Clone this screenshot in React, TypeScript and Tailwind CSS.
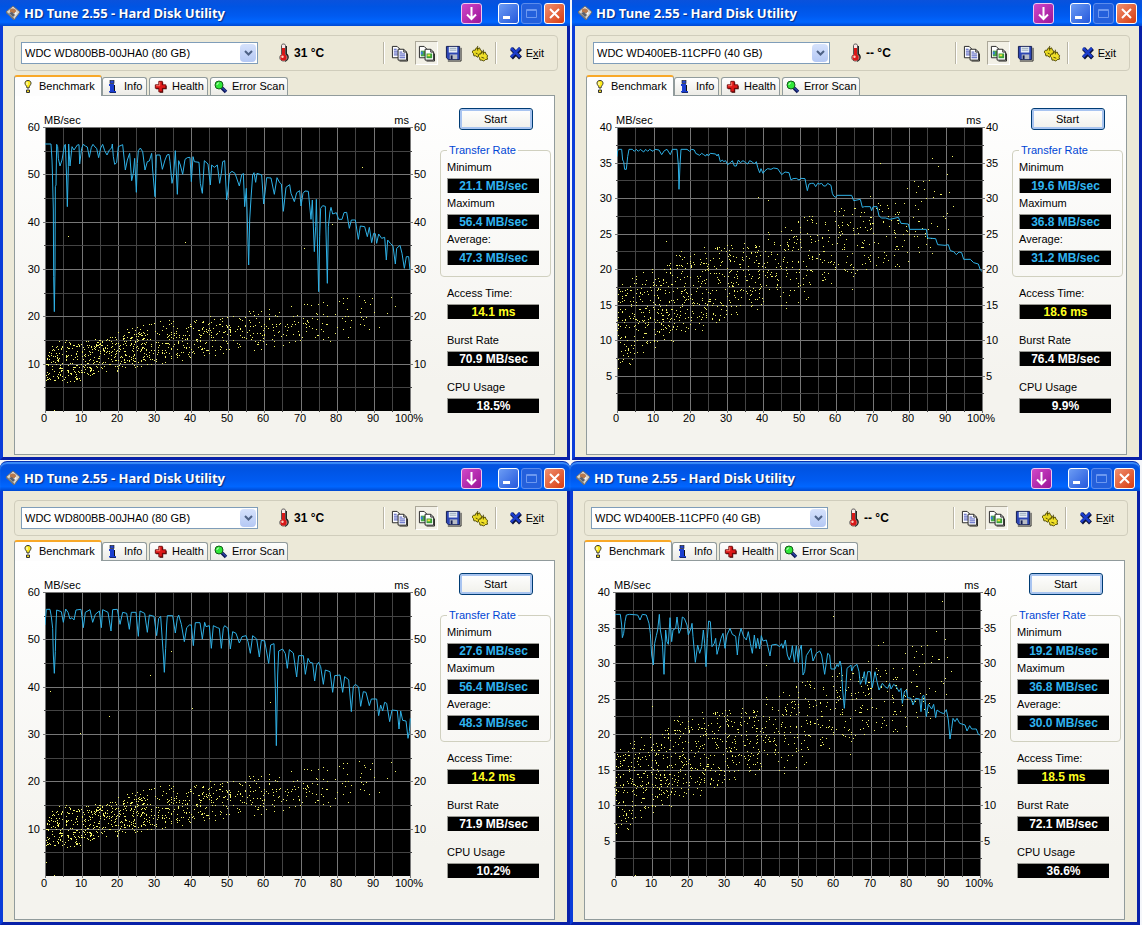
import clsx from "clsx";
import type { ReactNode } from "react";

type Drive = {
  name: string;
  max: number;
  step: number;
  minor: number;
  seed: number;
  dots: number;
  // [percent, lowest ms, highest ms]
  band: [number, number, number][];
};

type Run = {
  drive: Drive;
  temperature: string;
  minimum: string;
  maximum: string;
  average: string;
  access: string;
  burst: string;
  cpu: string;
  // top-left corner of the trace's own coordinates
  origin: [number, number];
  trace: string;
  strays: [number, number][];
};

const WD800: Drive = {
  name: "WDC WD800BB-00JHA0 (80 GB)",
  max: 60,
  step: 10,
  minor: 5,
  seed: 7,
  dots: 840,
  band: [
    [0, 4.8, 15],
    [10, 6.4, 15.5],
    [20, 8.5, 17],
    [30, 9.2, 19.5],
    [45, 11, 20],
    [60, 12.8, 22.5],
    [75, 14, 24],
    [100, 18, 26]
  ]
};

const WD400: Drive = {
  name: "WDC WD400EB-11CPF0 (40 GB)",
  max: 40,
  step: 5,
  minor: 2.5,
  seed: 23,
  dots: 940,
  band: [
    [0, 5.5, 19],
    [10, 8.2, 20.5],
    [20, 10.5, 23.5],
    [35, 13.5, 24.5],
    [50, 14.2, 28],
    [65, 17, 30],
    [80, 20, 33],
    [90, 23, 36],
    [100, 29, 36]
  ]
};

const RUNS: Run[] = [
  {
    drive: WD800,
    temperature: "31 °C",
    minimum: "21.1 MB/sec",
    maximum: "56.4 MB/sec",
    average: "47.3 MB/sec",
    access: "14.1 ms",
    burst: "70.9 MB/sec",
    cpu: "18.5%",
    origin: [135, 51],
    trace:
      "135,102 153,102 156,150 157,180 160,300 161,500 163,605 165,480 166,230 168,225 170,103 173,110 175,145 180,168 186,150 193,108 196,103 199,180 202,290 205,170 206,102 210,168 216,110 222,120 232,105 237,104 239,162 245,115 250,103 256,108 262,111 268,142 274,112 279,103 285,111 290,115 296,143 302,114 308,103 314,122 321,135 328,120 335,114 337,102 340,140 344,163 350,158 355,110 368,104 376,180 382,150 389,130 395,212 400,190 404,145 409,247 412,160 415,122 421,114 428,125 435,180 442,155 448,153 455,130 458,180 465,260 468,175 469,135 480,135 487,178 495,150 501,135 507,133 510,155 516,220 521,195 526,122 532,253 536,152 541,165 548,193 555,148 562,143 570,142 574,215 579,140 583,155 597,157 601,220 607,250 613,152 624,162 631,225 635,165 643,172 652,165 654,180 659,220 664,190 668,155 674,152 680,270 684,240 689,190 696,184 705,190 718,228 725,195 730,190 734,290 739,235 746,465 749,330 753,265 758,195 762,188 767,217 771,190 785,195 791,282 796,240 800,203 813,204 823,253 831,203 839,218 844,222 850,304 858,232 869,224 873,250 883,275 890,248 899,242 903,288 909,250 915,243 925,244 933,328 937,270 943,425 947,350 949,268 956,545 959,380 962,295 968,287 976,289 982,520 985,350 990,305 993,292 998,312 1009,308 1016,328 1026,328 1032,308 1040,307 1048,355 1054,330 1066,330 1075,388 1081,348 1094,350 1102,380 1108,352 1115,398 1121,370 1126,371 1130,400 1136,372 1145,385 1154,382 1159,450 1163,390 1171,400 1179,408 1186,462 1190,415 1200,406 1206,430 1213,475 1219,440 1226,440 1230,480",
    strays: [[6.4, 37], [38.4, 35.6], [71, 34.5], [78.6, 39.6], [86.8, 51.5], [2.5, 0.3]]
  },
  {
    drive: WD400,
    temperature: "-- °C",
    minimum: "19.6 MB/sec",
    maximum: "36.8 MB/sec",
    average: "31.2 MB/sec",
    access: "18.6 ms",
    burst: "76.4 MB/sec",
    cpu: "9.9%",
    origin: [52, 51],
    trace:
      "52,140 54,122 58,118 66,118 69,150 72,155 75,178 80,178 84,140 88,118 98,118 104,124 110,118 116,124 122,118 132,126 138,118 144,124 150,118 160,124 166,118 178,120 186,134 194,122 202,118 212,134 218,118 232,118 236,165 238,238 241,165 244,118 262,118 270,124 276,118 284,120 288,130 300,136 306,130 312,134 318,138 322,132 326,138 332,130 348,132 352,138 356,132 362,155 368,150 372,155 378,152 384,164 392,158 398,152 404,168 410,168 416,150 422,158 430,152 438,158 444,162 450,152 458,156 464,162 470,155 474,172 480,188 484,176 490,190 496,182 504,176 514,178 522,174 534,176 546,194 556,186 568,188 574,210 580,206 590,205 598,210 604,205 616,206 619,222 623,242 628,222 636,220 642,220 648,230 654,220 660,222 666,220 672,228 678,228 684,220 694,226 698,250 702,258 708,262 712,256 756,256 762,272 782,268 788,292 794,290 812,290 816,302 820,290 832,290 838,318 846,324 858,324 870,328 880,326 896,322 904,340 926,342 930,358 980,358 984,384 1008,386 1014,404 1036,406 1046,404 1052,422 1062,425 1070,434 1078,426 1086,428 1092,448 1112,448 1122,458 1136,462 1142,480 1147,484",
    strays: [[38.7, 30.2], [41.4, 29.7], [72, 34.9], [86.2, 35.6], [91.8, 35.9], [13.5, 23.9], [1.5, 7.1], [3.4, 6.7]]
  },
  {
    drive: WD800,
    temperature: "31 °C",
    minimum: "27.6 MB/sec",
    maximum: "56.4 MB/sec",
    average: "48.3 MB/sec",
    access: "14.2 ms",
    burst: "71.9 MB/sec",
    cpu: "10.2%",
    origin: [135, 51],
    trace:
      "135,150 137,125 139,103 150,103 154,125 158,160 160,240 163,295 166,230 168,150 170,105 184,110 190,142 197,102 204,112 210,132 216,128 222,135 228,105 243,103 250,158 256,112 270,104 278,142 286,118 298,108 304,158 308,104 324,112 333,168 338,104 352,103 360,148 368,112 380,115 388,163 394,112 408,112 415,184 420,108 434,115 442,172 448,120 462,124 470,182 476,130 482,124 490,240 493,292 497,220 500,150 502,122 518,122 526,174 532,130 536,120 544,148 553,200 560,158 568,150 574,150 580,212 586,143 600,143 607,192 614,142 618,155 628,152 634,220 640,152 652,158 658,160 664,220 670,160 674,152 684,160 691,222 698,170 708,175 718,204 726,185 738,182 744,200 751,235 758,182 770,192 778,246 784,196 794,198 806,265 812,210 822,206 826,340 829,512 833,300 836,228 848,222 856,236 862,280 868,224 880,234 890,306 896,242 910,242 916,298 924,250 930,262 938,264 944,318 950,270 956,262 962,275 970,328 976,285 990,290 998,352 1004,302 1020,300 1028,352 1034,305 1046,314 1054,410 1060,335 1066,328 1076,336 1082,394 1090,350 1098,352 1108,392 1114,372 1130,372 1136,422 1142,390 1148,408 1154,382 1160,385 1169,440 1176,405 1192,407 1197,462 1202,408 1208,436 1218,438 1224,490 1228,470 1231,430",
    strays: [[1.4, 39], [17.6, 33.9], [28.8, 42.4], [34.6, 47.6], [40.3, 35.4], [61.7, 36.7], [9.7, 30.2], [0.3, 3], [2.5, 0.3]]
  },
  {
    drive: WD400,
    temperature: "-- °C",
    minimum: "19.2 MB/sec",
    maximum: "36.8 MB/sec",
    average: "30.0 MB/sec",
    access: "18.5 ms",
    burst: "72.1 MB/sec",
    cpu: "36.6%",
    origin: [46, 51],
    trace:
      "46,120 50,118 62,118 66,150 68,188 72,175 76,140 80,120 90,118 114,120 121,135 128,118 140,120 148,145 152,175 156,240 161,270 165,205 170,182 174,165 179,118 182,165 188,200 193,298 198,165 202,200 206,208 211,128 216,200 220,165 228,160 232,126 238,175 244,160 248,126 254,130 262,150 266,180 274,160 277,145 280,185 287,262 294,210 300,235 306,215 311,165 315,205 319,275 323,190 327,138 332,140 337,215 344,205 348,190 352,238 358,215 364,190 370,175 376,220 382,180 391,160 398,178 408,184 413,240 418,185 424,160 432,185 440,195 446,170 452,205 458,235 464,180 469,220 474,190 480,222 485,182 490,198 500,195 511,243 516,210 530,208 540,215 546,206 550,220 557,195 563,240 569,255 574,240 578,212 584,262 590,212 596,262 600,225 605,210 610,300 615,290 620,242 634,220 640,258 650,235 660,228 666,240 675,298 684,235 690,240 694,282 706,282 712,268 716,275 721,258 725,275 729,345 734,400 738,345 742,280 754,270 756,288 762,275 772,268 778,290 782,328 790,310 794,290 798,328 804,290 812,290 818,338 826,290 832,320 838,345 848,325 856,335 864,340 870,325 874,342 882,328 890,335 898,350 904,340 908,385 914,350 920,345 924,368 934,370 940,390 948,370 960,372 964,410 968,365 972,360 976,375 980,425 986,388 996,402 1002,388 1008,428 1012,405 1022,412 1032,416 1040,404 1046,435 1051,492 1056,460 1060,430 1066,440 1072,430 1080,445 1096,450 1102,468 1110,452 1116,462 1130,462 1136,478 1141,480",
    strays: [[59.7, 36.6], [89.5, 38.7], [73.4, 33], [72, 32.6], [41.4, 29.7], [10.1, 23.9], [3.3, 6.7], [5.5, 0.1]]
  }
];

const PLOT = { x: 30, y: 31, w: 365, h: 284 };

function edgesAt(band: Drive["band"], p: number) {
  const i = Math.max(1, band.findIndex((b) => b[0] >= p));
  const [p0, lo0, hi0] = band[i - 1];
  const [p1, lo1, hi1] = band[i];
  const t = (p - p0) / (p1 - p0);
  return [lo0 + (lo1 - lo0) * t, hi0 + (hi1 - hi0) * t];
}

function accessDots(drive: Drive): [number, number][] {
  let s = drive.seed;
  const next = () => {
    s = (s + 0x6d2b79f5) | 0;
    let t = Math.imul(s ^ (s >>> 15), 1 | s);
    t = (t + Math.imul(t ^ (t >>> 7), 61 | t)) ^ t;
    return ((t ^ (t >>> 14)) >>> 0) / 4294967296;
  };
  return Array.from({ length: drive.dots }, () => {
    const p = 98 * (1 - Math.pow(next(), 0.5));
    const [lo, hi] = edgesAt(drive.band, p);
    return [p, lo + (hi - lo) * (0.8 * next() + 0.2 * next())];
  });
}

function range(from: number, to: number, step: number) {
  return Array.from({ length: Math.round((to - from) / step) + 1 }, (_, i) => from + i * step);
}

function Chart({ run }: { run: Run }) {
  const { drive, origin } = run;
  const px = (p: number) => Math.round(PLOT.x + (p / 100) * PLOT.w);
  const py = (v: number) => Math.round(PLOT.y + (1 - v / drive.max) * PLOT.h);
  const dots = [...accessDots(drive), ...run.strays].map(([p, v]) => `M${px(p)} ${py(v)}.5h1`).join("");
  const right = PLOT.x + PLOT.w;
  const bottom = PLOT.y + PLOT.h;

  return (
    <svg
      viewBox="0 0 425 330"
      role="img"
      aria-label={`Transfer rate of ${drive.name}`}
      className="block w-full text-[11px]"
    >
      <g shapeRendering="crispEdges">
        <rect x={PLOT.x} y={PLOT.y} width={PLOT.w} height={PLOT.h} fill="#000" />
        {range(0, 100, 5).map((p) => (
          <path key={p} d={`M${px(p)}.5 ${PLOT.y}V${bottom + (p % 10 ? 1 : 2)}`} stroke={p % 10 ? "#444" : "#777"} />
        ))}
        {range(drive.minor, drive.max, drive.minor).map((v) => {
          const major = v % drive.step === 0;
          const out = major ? 2 : 1;
          return (
            <path key={v} d={`M${PLOT.x - out} ${py(v)}.5H${right + out + 1}`} stroke={major ? "#777" : "#444"} />
          );
        })}
        <path d={dots} stroke="#f4f46a" />
      </g>
      <svg
        x={PLOT.x}
        y={PLOT.y}
        width={PLOT.w + 1}
        height={PLOT.h}
        viewBox={`${origin[0]} ${origin[1]} 1098 852`}
        preserveAspectRatio="none"
      >
        <polyline points={run.trace} fill="none" stroke="#2fb1e6" strokeWidth="3" />
      </svg>
      <text x="29" y="28">MB/sec</text>
      <text x="394" y="28" textAnchor="end">ms</text>
      {range(drive.step, drive.max, drive.step).map((v) => (
        <g key={v}>
          <text x="25" y={py(v) + 4} textAnchor="end">{v}</text>
          <text x="399" y={py(v) + 4}>{v}</text>
        </g>
      ))}
      {range(0, 100, 10).map((p) => (
        <text key={p} x={px(p) - 1} y="326" textAnchor="middle">
          {p === 100 ? "100%" : p}
        </text>
      ))}
    </svg>
  );
}

/* icons */

function DriveIcon() {
  return (
    <svg width="16" height="16" viewBox="0 0 16 16" aria-hidden="true">
      <path d="M1 7 8 1l7 6-6 8z" fill="#d8d4cc" stroke="#6b6b70" />
      <path d="m1 8 8 7v-2L2 7z" fill="#777" />
      <path d="M5 4.500c2-2 6-1 6 1.500s-4 3-6 1z" fill="#b8794c" />
      <path d="m4 8 3-1 3 3-2 2z" fill="#5a6270" />
      <path d="m10 7 2 1-2 2z" fill="#f7f7f7" />
    </svg>
  );
}

function BulbIcon() {
  return (
    <svg width="16" height="16" viewBox="0 0 16 16" aria-hidden="true">
      <path d="M8 1.500c2 0 3 1.200 3 2.800S9 7 9 9H7c0-2-2-3-2-4.700S6 1.500 8 1.500z" fill="#ffec1c" stroke="#333" />
      <path d="M7 3v3" stroke="#fff" />
      <path d="M6.500 11h3v2.500h-3z" fill="#f0d820" stroke="#333" />
    </svg>
  );
}

function InfoIcon() {
  return (
    <svg width="16" height="16" viewBox="0 0 16 16" aria-hidden="true">
      <path d="M5 6h5v6h1v2H5z" fill="#111" />
      <path d="M4 5h5v7h2v1.500H4V12h1V7H4z" fill="#1c3fd0" />
      <rect x="5" y="1.500" width="4" height="3" fill="#2746c8" stroke="#111" strokeWidth=".6" />
    </svg>
  );
}

function HealthIcon() {
  return (
    <svg width="14" height="14" viewBox="0 0 16 16" aria-hidden="true">
      <path d="M6.500 2.500h4v4h4v4h-4v4h-4v-4h-4v-4h4z" fill="#3a0505" />
      <path d="M5.500 1.500h4v4h4v4h-4v4h-4v-4h-4v-4h4z" fill="#e01818" stroke="#6d0a0a" />
      <path d="M6.500 2.500v4h-4" fill="none" stroke="#ff8a7a" />
    </svg>
  );
}

function ScanIcon() {
  return (
    <svg width="16" height="16" viewBox="0 0 16 16" aria-hidden="true">
      <path d="m8 8 5 5" stroke="#101a5c" strokeWidth="3.500" />
      <path d="m9 8.500 4 4" stroke="#3c62dc" />
      <circle cx="6" cy="6" r="4" fill="#30e838" stroke="#14591a" />
      <path d="M4 6c0-1.500 1-2 2-2" fill="none" stroke="#d8ffd8" />
    </svg>
  );
}

function ThermometerIcon() {
  return (
    <svg width="12" height="20" viewBox="0 0 12 20" aria-hidden="true">
      <path d="M8 3v8c3 2 2 6-1 7" fill="none" stroke="#222" strokeWidth="2" />
      <path d="M3.500 2.500c0-2 4-2 4 0v9c3 2 2 6.500-2 6.500s-5-4.500-2-6.500z" fill="#f8e8e8" stroke="#555" />
      <path d="M5.500 5v8" stroke="#d81818" strokeWidth="3" />
      <circle cx="5.500" cy="14.500" r="3.200" fill="#d81818" />
      <circle cx="4.500" cy="13.800" r="1.200" fill="#ffd0c0" />
    </svg>
  );
}

function CopyIcon({ picture = false }: { picture?: boolean }) {
  return (
    <svg width="17" height="17" viewBox="0 0 18 18" className="shrink-0" aria-hidden="true">
      <path d="M1.500 1.500h5l3 3v9h-8z" fill="#fff" stroke="#222" />
      {picture ? (
        <path d="M3 6h5v6H3z" fill="#48a848" />
      ) : (
        <path d="M3 4.500h3M3 6.500h5M3 8.500h5M3 10.500h5" stroke="#3a48b8" />
      )}
      <path d="M9 17h8.500V9" fill="none" stroke="#222" />
      <path d="M7.500 4.500h6l3 3v8.500h-9z" fill="#fff" stroke="#222" />
      <path d="M13.500 4.500v3h3" fill="none" stroke="#222" />
      {picture ? (
        <g>
          <path d="M9 9h6v5H9z" fill="#38a038" />
          <path d="M10 10h3v2h-3z" fill="#f0e440" />
          <path d="M3 7h2v3H3z" fill="#3a78e0" />
        </g>
      ) : (
        <path d="M9 7.500h3M9 9.500h6M9 11.500h6M9 13.500h6" stroke="#3a48b8" />
      )}
    </svg>
  );
}

function SaveIcon() {
  return (
    <svg width="17" height="17" viewBox="0 0 18 18" className="shrink-0" aria-hidden="true">
      <path d="M3 17h14V3" fill="none" stroke="#222" />
      <path d="M1.500 1.500h14v14h-12l-2-2z" fill="#2d46b4" stroke="#101a4c" />
      <path d="M4 2h9v6H4z" fill="#e8eef4" />
      <path d="M5 3.500h7M5 5.500h7" stroke="#90a4b8" />
      <path d="M5 10h8v5H5z" fill="#b8bcc4" />
      <path d="M6 11h2v4H6z" fill="#111b50" />
    </svg>
  );
}

function OptionsIcon() {
  return (
    <svg width="17" height="17" viewBox="0 0 18 18" className="shrink-0" aria-hidden="true">
      <path
        d="m1.500 5.500 2 0 1-2.500 2 1 1.500-1 1 2.500 1.500 1-1 2 .5 2-2.500.5-1.500 2-2-1.500-2 0-.5-2.500-1.500-1.500z"
        fill="#e8d820"
        stroke="#4c4600"
      />
      <path
        d="m7.500 9.500 2 0 1-2.500 2 1 1.500-.5 1 2.500 1.500 1-.5 2 .5 2-2.500.5-1.500 1.500-2-1-2 0-.5-2.500-1.500-1.500z"
        fill="#f0e028"
        stroke="#4c4600"
      />
      <path d="M6 1v5M12 5v5M4 8.500l2 1M10 13l3 1" stroke="#4c4600" />
    </svg>
  );
}

function ExitIcon() {
  return (
    <svg width="14" height="14" viewBox="0 0 14 14" aria-hidden="true">
      <path d="m2.500 2.500 9 9.500m0-9.500-9 9.500" stroke="#0a1038" strokeWidth="4" />
      <path d="m2 2 9 9m0-9-9 9" stroke="#1c3cc8" strokeWidth="2.500" />
    </svg>
  );
}

/* window parts */

function TitleButton({ label, className, children }: { label: string; className: string; children: ReactNode }) {
  return (
    <button
      type="button"
      aria-label={label}
      className={clsx("flex size-[21px] items-center justify-center rounded-[3px] border", className)}
    >
      <svg width="19" height="19" viewBox="0 0 19 19" fill="none" aria-hidden="true">
        {children}
      </svg>
    </button>
  );
}

function TitleBar({ rounded }: { rounded: boolean }) {
  return (
    <header
      className={clsx(
        "flex items-center bg-[linear-gradient(#0a52dc,#0054e3_25%,#005af0_60%,#0066ff_85%,#0048d0)] pr-[5px] pl-[5px]",
        rounded ? "h-[30px] rounded-t-[7px] border-t border-[#0831b0] pt-[3px] shadow-[inset_0_2px_1px_#3c8cf8]" : "h-[26px]"
      )}
    >
      <DriveIcon />
      <h2 className="ml-[3px] flex-1 font-['Noto_Sans',sans-serif] text-[13px] leading-4 font-bold text-white [text-shadow:1px_1px_1px_#0a2a80]">
        HD Tune 2.55 - Hard Disk Utility
      </h2>
      <TitleButton label="Send to tray" className="mr-4 border-[#f0c8f0] bg-[linear-gradient(135deg,#d048c8,#9c1498)]">
        <path d="M9.500 3v12M5 10.500l4.500 4.500 4.500-4.500" stroke="#fff" strokeWidth="2" />
      </TitleButton>
      <div className="flex gap-0.5">
        <TitleButton label="Minimize" className="border-white bg-[linear-gradient(135deg,#6c9cf4,#2458dc)]">
          <path d="M4 13.500h7" stroke="#fff" strokeWidth="3" />
        </TitleButton>
        <TitleButton label="Maximize" className="border-[#5c8cec] bg-[#2460dc]">
          <path d="M4.500 5.500h10v8h-10zM4 6.500h11" stroke="#6c98f0" />
        </TitleButton>
        <TitleButton label="Close" className="border-white bg-[linear-gradient(135deg,#f09070,#d83c10)]">
          <path d="m5 5 9 9m0-9-9 9" stroke="#fff" strokeWidth="2" />
        </TitleButton>
      </div>
    </header>
  );
}

function ToolButton({ label, pressed = false, children }: { label: string; pressed?: boolean; children: ReactNode }) {
  return (
    <button
      type="button"
      aria-label={label}
      className={clsx(
        "flex h-6 w-[23px] items-center justify-center border",
        pressed ? "border-[#aca899] border-r-white border-b-white bg-[#f2f0e6]" : "border-transparent"
      )}
    >
      {children}
    </button>
  );
}

function Separator() {
  return <div className="h-[22px] w-0.5 border-r border-l border-r-white border-l-[#b8b4a4]" />;
}

function Toolbar({ run }: { run: Run }) {
  return (
    <div className="mr-[9px] ml-[11px] flex h-9 items-center rounded-[4px] border border-[#d0cdbc] pr-[13px] pl-1.5">
      <div className="relative w-[237px]">
        <select
          aria-label="Drive"
          className="block h-[22px] w-full appearance-none border border-[#7f9db9] bg-white pl-[3px] text-[11px] leading-4 text-black"
        >
          <option>{run.drive.name}</option>
        </select>
        <span className="pointer-events-none absolute top-0.5 right-0.5 flex h-[18px] w-4 items-center justify-center rounded-sm bg-[linear-gradient(#d6e2fc,#b4c8f4)]">
          <svg width="9" height="6" viewBox="0 0 9 6" fill="none" aria-hidden="true">
            <path d="m1 1 3.500 3.500L8 1" stroke="#4d6185" strokeWidth="2" />
          </svg>
        </span>
      </div>
      <div className="ml-5 flex flex-1 items-center gap-1 text-xs font-bold">
        <ThermometerIcon />
        {run.temperature}
      </div>
      <Separator />
      <div className="mx-[3px] flex w-[104px] justify-between">
        <ToolButton label="Copy text to clipboard">
          <CopyIcon />
        </ToolButton>
        <ToolButton label="Copy screenshot to clipboard" pressed>
          <CopyIcon picture />
        </ToolButton>
        <ToolButton label="Save screenshot">
          <SaveIcon />
        </ToolButton>
        <ToolButton label="Options">
          <OptionsIcon />
        </ToolButton>
      </div>
      <Separator />
      <button type="button" className="ml-3 flex items-center gap-[3px] text-[11px]">
        <ExitIcon />
        <span>
          E<u>x</u>it
        </span>
      </button>
    </div>
  );
}

function Tab({ className, children }: { className: string; children: ReactNode }) {
  return (
    <button
      type="button"
      role="tab"
      aria-selected="false"
      className={clsx(
        "flex h-[18px] items-center rounded-t-[3px] border border-b-0 border-[#919b9c] bg-[linear-gradient(#fff,#ecebe6)] text-[11px]",
        className
      )}
    >
      {children}
    </button>
  );
}

function Tabs() {
  return (
    <div role="tablist" className="mt-1 ml-[11px] flex h-5 items-end">
      <button
        type="button"
        role="tab"
        aria-selected="true"
        className="relative -mb-px flex h-[21px] w-[88px] items-center gap-[3px] rounded-t-[3px] border border-t-2 border-b-0 border-[#919b9c] border-t-[#f8a828] bg-[#fdfdfd] pl-[5px] text-[11px]"
      >
        <BulbIcon />
        Benchmark
      </button>
      <Tab className="w-[45px] gap-[3px] pl-0.5">
        <InfoIcon />
        Info
      </Tab>
      <Tab className="ml-0.5 w-[59px] gap-1 pl-1">
        <HealthIcon />
        Health
      </Tab>
      <Tab className="ml-0.5 w-[78px] gap-[3px] pl-0.5">
        <ScanIcon />
        Error Scan
      </Tab>
    </div>
  );
}

function Reading({ label, value, className }: { label: string; value: string; className: string }) {
  return (
    <div>
      <dt className="mb-[3px]">{label}</dt>
      <dd
        className={clsx(
          "h-[15px] border-t border-l border-[#9a9a94] bg-black text-center text-xs leading-[15px] font-bold",
          className
        )}
      >
        {value}
      </dd>
    </div>
  );
}

function HdTuneWindow({ run, rounded = false }: { run: Run; rounded?: boolean }) {
  return (
    <section className="min-w-0 flex-1">
      <TitleBar rounded={rounded} />
      <div className="border-3 border-t-0 border-[#0a3cd8] border-r-[#0820a8] border-b-[#0820a8] bg-[#ece9d8] pt-[9px] pb-0.5">
        <Toolbar run={run} />
        <Tabs />
        <div
          role="tabpanel"
          className="mr-3 ml-[11px] flex border border-[#919b9c] bg-[linear-gradient(#fff,#f4f3ee_80%)] pr-[3px] pb-7"
        >
          <div className="min-w-0 flex-1">
            <Chart run={run} />
          </div>
          <div className="w-[111px] shrink-0 pt-3 text-[11px] leading-4">
            <button
              type="button"
              className="mx-auto block h-[22px] w-[74px] rounded-[3px] border border-[#003c74] bg-[linear-gradient(#fff,#f0f0ea)] shadow-[inset_0_0_0_2px_#a8c4f0]"
            >
              Start
            </button>
            <fieldset className="mt-3 rounded-[4px] border border-[#d0d0bf] pt-px pr-[11px] pb-[11px] pl-1.5">
              <legend className="px-0.5 text-[#0046d5]">Transfer Rate</legend>
              <dl className="grid gap-0.5">
                <Reading label="Minimum" value={run.minimum} className="text-[#30b4f0]" />
                <Reading label="Maximum" value={run.maximum} className="text-[#30b4f0]" />
                <Reading label="Average:" value={run.average} className="text-[#30b4f0]" />
              </dl>
            </fieldset>
            <dl className="mt-2 grid gap-[13px] pr-3 pl-[7px]">
              <Reading label="Access Time:" value={run.access} className="text-[#ffff20]" />
              <Reading label="Burst Rate" value={run.burst} className="text-white" />
              <Reading label="CPU Usage" value={run.cpu} className="text-white" />
            </dl>
          </div>
        </div>
      </div>
    </section>
  );
}

export default function App() {
  return (
    <main className="bg-[#f4f6fa] font-['Liberation_Sans',Arial,sans-serif] text-black">
      <div className="flex gap-0.5">
        <HdTuneWindow run={RUNS[0]} />
        <HdTuneWindow run={RUNS[1]} />
      </div>
      <div className="mt-px flex pr-0.5">
        <HdTuneWindow run={RUNS[2]} rounded />
        <HdTuneWindow run={RUNS[3]} rounded />
      </div>
    </main>
  );
}
